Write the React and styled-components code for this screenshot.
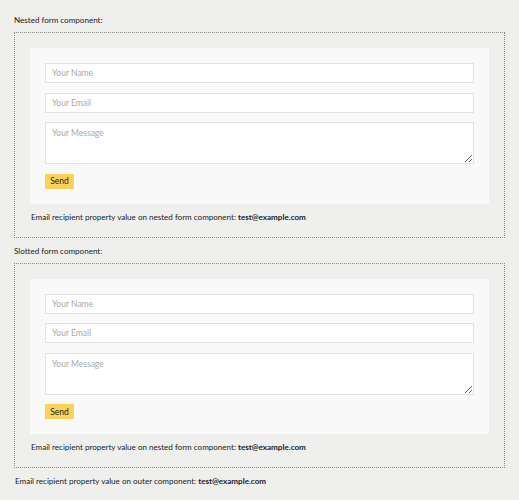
import React from 'react';
import styled, { createGlobalStyle } from 'styled-components';

const GlobalStyle = createGlobalStyle`
  html, body {
    margin: 0;
    background: #efefed;
  }
  body {
    font-family: Lato, "Liberation Sans", sans-serif;
    color: #222;
  }
`;

const ContactForm = () => (
  <Card>
    <Form onSubmit={e => e.preventDefault()}>
      <Input type="text" placeholder="Your Name" />
      <Input type="email" placeholder="Your Email" />
      <TextArea placeholder="Your Message" />
      <SendButton type="submit">Send</SendButton>
    </Form>
  </Card>
);

const FormComponent = ({ recipient }) => (
  <>
    <ContactForm />
    <Note inset>
      Email recipient property value on nested form component: <b>{recipient}</b>
    </Note>
  </>
);

const App = () => {
  const recipient = 'test@example.com';

  return (
    <Page>
      <GlobalStyle />
      <Label>Nested form component:</Label>
      <Frame>
        <FormComponent recipient={recipient} />
      </Frame>
      <Label>Slotted form component:</Label>
      <Frame>
        <FormComponent recipient={recipient} />
      </Frame>
      <Note>
        Email recipient property value on outer component: <b>{recipient}</b>
      </Note>
    </Page>
  );
};

export default App;

const Page = styled.div`
  padding: 13px 14px 14px;
  font-size: 8.1px;
  letter-spacing: -0.02px;
`;

const Label = styled.div`
  line-height: 14px;
  margin-bottom: 5px;
`;

const Frame = styled.div`
  border: 1px dotted #8a8a8a;
  padding: 15px 15px 0;
  margin-bottom: 6px;
`;

const Card = styled.div`
  background: #f9f9f9;
  padding: 15px;
`;

const Form = styled.form`
  display: flex;
  flex-direction: column;
  align-items: flex-start;
  gap: 9.5px;
`;

const fieldStyles = `
  box-sizing: border-box;
  width: 100%;
  border: 1px solid #e2e2e2;
  background: #fff;
  font-family: inherit;
  font-size: 8.5px;
  color: #222;
  padding: 0 6px;
  margin: 0;
  outline: none;
  &::placeholder {
    color: #a8a8a8;
  }
`;

const Input = styled.input`
  ${fieldStyles}
  height: 20px;
`;

const TextArea = styled.textarea`
  ${fieldStyles}
  height: 42px;
  padding-top: 5px;
  resize: vertical;
  display: block;
`;

const SendButton = styled.button`
  height: 15px;
  width: 29px;
  padding: 0;
  border: none;
  background: #fdd25a;
  font-family: inherit;
  font-size: 8.5px;
  color: #222;
`;

const Note = styled.div`
  line-height: 14px;
  padding: ${p => (p.inset ? '6px 1px 13px' : '0 1px')};
  b {
    font-weight: 700;
  }
`;
